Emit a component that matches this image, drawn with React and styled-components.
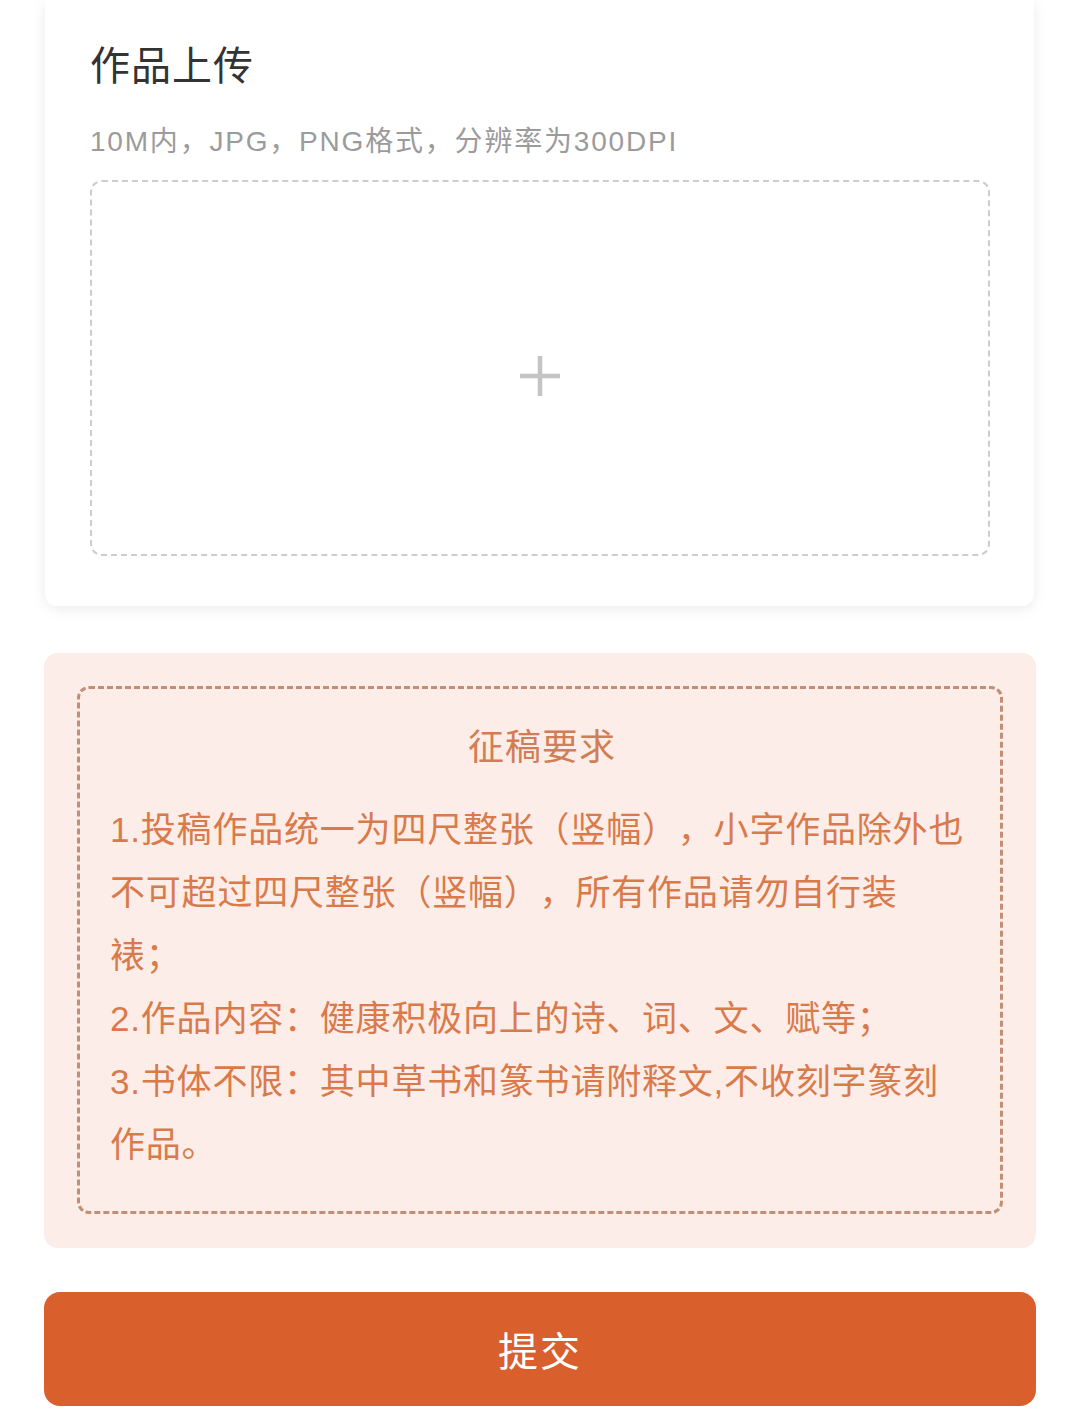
import styled, { createGlobalStyle } from 'styled-components';

const GlobalStyle = createGlobalStyle`
  html, body {
    margin: 0;
    padding: 0;
    background: #ffffff;
  }
  body {
    font-family: 'Liberation Sans', 'Noto Sans CJK SC', sans-serif;
  }
`;

// each rule is split into the lines it shows on the page
const rules = [
    ['1.投稿作品统一为四尺整张（竖幅），小字作品除外也', '不可超过四尺整张（竖幅），所有作品请勿自行装', '裱；'],
    ['2.作品内容：健康积极向上的诗、词、文、赋等；'],
    ['3.书体不限：其中草书和篆书请附释文,不收刻字篆刻', '作品。'],
];

function PlusIcon() {
    return (
        <svg width="42" height="42" viewBox="0 0 42 42" fill="none">
            <path d="M21 1v40M1 21h40" stroke="#c4c4c4" strokeWidth="4.5" />
        </svg>
    );
}

function App() {
    return (
        <Page>
            <GlobalStyle />
            <UploadCard>
                <CardTitle>作品上传</CardTitle>
                <CardHint>10M内，JPG，PNG格式，分辨率为300DPI</CardHint>
                <DropZone type="button">
                    <PlusIcon />
                </DropZone>
            </UploadCard>

            <Notice>
                <NoticeFrame>
                    <NoticeTitle>征稿要求</NoticeTitle>
                    <RuleList>
                        {rules.map((lines) => (
                            <Rule key={lines[0]}>
                                {lines.map((l) => (
                                    <RuleLine key={l}>{l}</RuleLine>
                                ))}
                            </Rule>
                        ))}
                    </RuleList>
                </NoticeFrame>
            </Notice>

            <SubmitButton type="button">提交</SubmitButton>
        </Page>
    );
}

export default App;

const Page = styled.div`
    box-sizing: border-box;
    width: 1080px;
    min-height: 1409px;
    padding: 0 44px 40px 44px;
    display: flex;
    flex-direction: column;
`;

const UploadCard = styled.section`
    margin: 0 2px 0 1px;
    padding: 36px 44px 50px 45px;
    background: #ffffff;
    border-radius: 0 0 12px 12px;
    box-shadow: 0 3px 14px rgba(0, 0, 0, 0.08);
    display: flex;
    flex-direction: column;
`;

const CardTitle = styled.h2`
    margin: 0;
    font-size: 40px;
    line-height: 60px;
    font-weight: 400;
    color: #333333;
    letter-spacing: 1px;
`;

const CardHint = styled.p`
    margin: 26px 0 0 0;
    font-size: 28px;
    line-height: 40px;
    color: #9b9b9b;
    letter-spacing: 1.8px;
    text-spacing-trim: space-all;
`;

const DropZone = styled.button`
    margin-top: 18px;
    height: 376px;
    width: 100%;
    box-sizing: border-box;
    background: transparent;
    border: 2px dashed #cdcdcd;
    border-radius: 12px;
    display: flex;
    align-items: center;
    justify-content: center;
    padding: 16px 0 0 0;
    cursor: pointer;
`;

const Notice = styled.section`
    margin-top: 47px;
    padding: 33px 33px 34px 33px;
    background: #fcede8;
    border-radius: 14px;
`;

const NoticeFrame = styled.div`
    box-sizing: border-box;
    border: 3px dashed #c28e76;
    border-radius: 12px;
    padding: 29px 26px 35px 30px;
`;

const NoticeTitle = styled.h3`
    margin: 0;
    text-align: center;
    font-size: 36px;
    line-height: 60px;
    font-weight: 400;
    color: #d27e55;
    letter-spacing: 1px;
`;

const RuleList = styled.div`
    margin-top: 20px;
`;

const Rule = styled.p`
    margin: 0;
    font-size: 35px;
    line-height: 63px;
    color: #d97a4b;
    letter-spacing: 0.8px;
    text-spacing-trim: space-all;
`;

const RuleLine = styled.span`
    display: block;
    white-space: nowrap;
`;

const SubmitButton = styled.button`
    margin-top: 44px;
    height: 114px;
    width: 100%;
    border: none;
    border-radius: 16px;
    background: #d95f2c;
    color: #ffffff;
    font-family: 'Liberation Sans', 'Noto Sans CJK SC', sans-serif;
    font-size: 40px;
    letter-spacing: 2px;
    cursor: pointer;
`;
